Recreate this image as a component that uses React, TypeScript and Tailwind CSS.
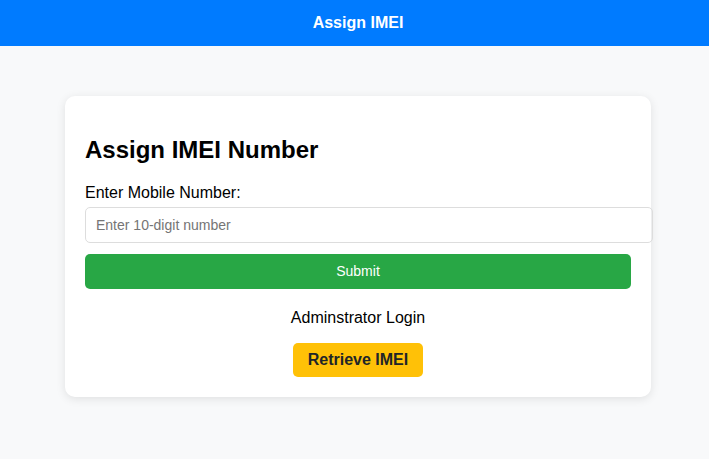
export default function App() {
  return (
    <div className="min-h-screen bg-[#f8f9fa] font-['Liberation_Sans',Arial,sans-serif] text-black">
      <header className="flex h-[46px] items-center justify-center bg-[#007bff] pl-[7px]">
        <h1 className="text-[16px] font-bold text-white">Assign IMEI</h1>
      </header>
      <main className="pt-[50px] pl-[65px]">
        <div className="w-[586px] rounded-[10px] bg-white p-5 shadow-[0_2px_10px_rgba(0,0,0,0.1)]">
          <h2 className="mt-[20px] mb-[20px] text-[24px] leading-[28px] font-bold">
            Assign IMEI Number
          </h2>
          <label className="block text-[16px] leading-[18px]">Enter Mobile Number:</label>
          <input
            type="text"
            placeholder="Enter 10-digit number"
            className="mt-[5px] box-border h-[36px] w-[568px] rounded-[5px] border border-[#ddd] px-[10px] text-[14px] placeholder:text-[#757575]"
          />
          <button className="mt-[11px] h-[35px] w-full rounded-[5px] bg-[#28a745] text-[14px] text-white">
            Submit
          </button>
          <p className="mt-[20px] text-center text-[16px] leading-[18px]">Adminstrator Login</p>
          <div className="mt-[16px] flex justify-center">
            <button className="h-[34px] w-[130px] rounded-[5px] bg-[#ffc107] text-[16px] font-bold text-[#212529]">
              Retrieve IMEI
            </button>
          </div>
        </div>
      </main>
    </div>
  );
}
